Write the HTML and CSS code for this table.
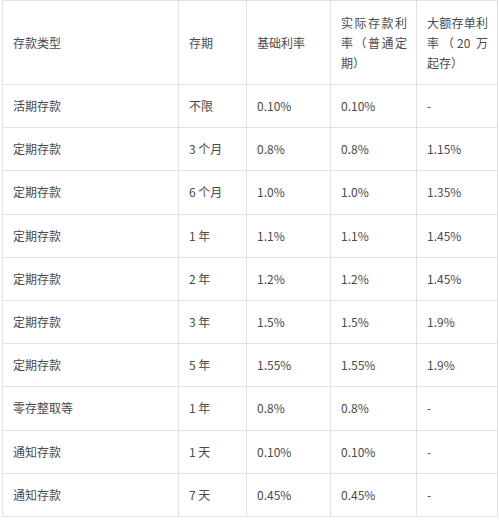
FILE: index.html
```html
<!DOCTYPE html>
<html lang="zh-CN">
<head>
<meta charset="utf-8">
<link rel="stylesheet" href="styles.css">
</head>
<body>
<div class="table">
  <div class="cell head">存款类型</div>
  <div class="cell head">存期</div>
  <div class="cell head">基础利率</div>
  <div class="cell head"><span>实际存款利率（普通定期）</span></div>
  <div class="cell head"><span>大额存单利率（20 万起存）</span></div>

  <div class="cell">活期存款</div><div class="cell">不限</div><div class="cell">0.10%</div><div class="cell">0.10%</div><div class="cell">-</div>
  <div class="cell">定期存款</div><div class="cell">3 个月</div><div class="cell">0.8%</div><div class="cell">0.8%</div><div class="cell">1.15%</div>
  <div class="cell">定期存款</div><div class="cell">6 个月</div><div class="cell">1.0%</div><div class="cell">1.0%</div><div class="cell">1.35%</div>
  <div class="cell">定期存款</div><div class="cell">1 年</div><div class="cell">1.1%</div><div class="cell">1.1%</div><div class="cell">1.45%</div>
  <div class="cell">定期存款</div><div class="cell">2 年</div><div class="cell">1.2%</div><div class="cell">1.2%</div><div class="cell">1.45%</div>
  <div class="cell">定期存款</div><div class="cell">3 年</div><div class="cell">1.5%</div><div class="cell">1.5%</div><div class="cell">1.9%</div>
  <div class="cell">定期存款</div><div class="cell">5 年</div><div class="cell">1.55%</div><div class="cell">1.55%</div><div class="cell">1.9%</div>
  <div class="cell">零存整取等</div><div class="cell">1 年</div><div class="cell">0.8%</div><div class="cell">0.8%</div><div class="cell">-</div>
  <div class="cell">通知存款</div><div class="cell">1 天</div><div class="cell">0.10%</div><div class="cell">0.10%</div><div class="cell">-</div>
  <div class="cell">通知存款</div><div class="cell">7 天</div><div class="cell">0.45%</div><div class="cell">0.45%</div><div class="cell">-</div>
</div>
</body>
</html>
```
FILE: styles.css
```css
html, body {
  margin: 0;
  padding: 0;
  background: #ffffff;
}
body {
  padding-left: 2px;
  font-family: "Noto Sans CJK SC", "Noto Sans", sans-serif;
  font-size: 12px;
  color: #4a4a4a;
}
.table {
  display: grid;
  grid-template-columns: 176px 68px 84px 86px 81px;
  grid-template-rows: 84px repeat(10, 43.2px);
  border-left: 1px solid #e2e2e2;
  border-top: 1px solid #e2e2e2;
  width: max-content;
}
.cell {
  box-sizing: border-box;
  border-right: 1px solid #e2e2e2;
  border-bottom: 1px solid #e2e2e2;
  padding: 0 9px 0 10px;
  display: flex;
  align-items: center;
  line-height: 20px;
  white-space: normal;
}
.head span {
  display: block;
  width: 100%;
  text-align: justify;
}
```
